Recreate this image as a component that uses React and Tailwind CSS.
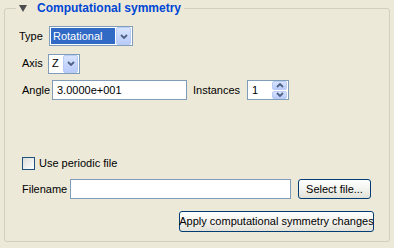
import React from "react";

const font = { fontFamily: '"Liberation Sans", Arial, sans-serif' };

// small chevron used by combo and spin buttons
const Chevron = ({ up = false }) => (
  <svg width="8" height="5" viewBox="0 0 8 5" className="block">
    <path
      d={up ? "M1 4 L4 1 L7 4" : "M1 1 L4 4 L7 1"}
      fill="none"
      stroke="#4d6185"
      strokeWidth="1.8"
    />
  </svg>
);

const DropButton = () => (
  <div className="w-[15px] h-[18px] my-auto mr-px rounded-[2px] border border-[#b9ccf6] bg-gradient-to-b from-[#d8e3fd] to-[#b8cbfa] flex items-center justify-center">
    <Chevron />
  </div>
);

const Combo = ({ value, width, selected }) => (
  <div
    className="h-[20px] border border-[#7f9db9] bg-white flex items-stretch"
    style={{ width }}
  >
    <div className="flex-1 p-px flex">
      <div
        className={`flex-1 flex items-center pl-[2px] ${
          selected ? "bg-[#316ac5] text-white" : "text-black"
        }`}
      >
        {value}
      </div>
    </div>
    <DropButton />
  </div>
);

const XpButton = ({ children, className = "" }) => (
  <button
    className={`rounded-[3px] border border-[#003c74] bg-gradient-to-b from-[#ffffff] via-[#f3f3ef] to-[#e1e1d8] text-black whitespace-nowrap flex items-center justify-center ${className}`}
  >
    {children}
  </button>
);

export default function App() {
  return (
    <div
      className="w-[394px] h-[248px] bg-[#ece9d8] pl-[4px] text-[11px] text-black overflow-hidden"
      style={font}
    >
      <fieldset className="w-[386px] h-[242px] border border-[#d0d0bf] rounded-[3px] p-0">
        <legend className="ml-[11px] px-[3px] flex items-center h-[16px] text-[12px] leading-[16px] font-bold text-[#0046d5]">
          <svg width="8" height="7" viewBox="0 0 8 7" className="mr-[10px]">
            <path d="M0 0 H8 L4 7 Z" fill="#4d4d4d" />
          </svg>
          Computational symmetry
        </legend>

        <div className="flex flex-col">
          {/* Type */}
          <div className="mt-[10px] ml-[14px] flex items-center h-[20px]">
            <span className="w-[30px]">Type</span>
            <Combo value="Rotational" width={84} selected />
          </div>

          {/* Axis */}
          <div className="mt-[7px] ml-[17px] flex items-center h-[21px]">
            <span className="w-[26px]">Axis</span>
            <Combo value="Z" width={32} />
          </div>

          {/* Angle / Instances */}
          <div className="mt-[6px] ml-[17px] flex items-center h-[20px]">
            <span className="w-[30px]">Angle</span>
            <div className="w-[135px] h-[20px] border border-[#7f9db9] bg-white flex items-center pl-[4px]">
              3.0000e+001
            </div>
            <span className="ml-[6px] w-[54px]">Instances</span>
            <div className="w-[42px] h-[20px] border border-[#7f9db9] bg-white flex items-center">
              <span className="flex-1 pl-[4px]">1</span>
              <div className="w-[15px] h-[18px] mr-px flex flex-col gap-px">
                <div className="flex-1 rounded-[2px] border border-[#b9ccf6] bg-gradient-to-b from-[#d8e3fd] to-[#b8cbfa] flex items-center justify-center">
                  <Chevron up />
                </div>
                <div className="flex-1 rounded-[2px] border border-[#b9ccf6] bg-gradient-to-b from-[#d8e3fd] to-[#b8cbfa] flex items-center justify-center">
                  <Chevron />
                </div>
              </div>
            </div>
          </div>

          {/* Use periodic file */}
          <div className="mt-[57px] ml-[17px] flex items-center h-[13px]">
            <div className="w-[13px] h-[13px] border border-[#1c5180] bg-gradient-to-br from-[#dcdcd7] to-[#ffffff]" />
            <span className="ml-[4px]">Use periodic file</span>
          </div>

          {/* Filename */}
          <div className="mt-[9px] ml-[17px] flex items-center h-[20px]">
            <span className="w-[48px]">Filename</span>
            <div className="w-[221px] h-[20px] border border-[#7f9db9] bg-white" />
            <XpButton className="ml-[7px] w-[73px] h-[20px]">Select file...</XpButton>
          </div>

          {/* Apply */}
          <div className="mt-[12px] flex justify-end pr-[15px]">
            <XpButton className="w-[195px] h-[21px]">
              Apply computational symmetry changes
            </XpButton>
          </div>
        </div>
      </fieldset>
    </div>
  );
}
